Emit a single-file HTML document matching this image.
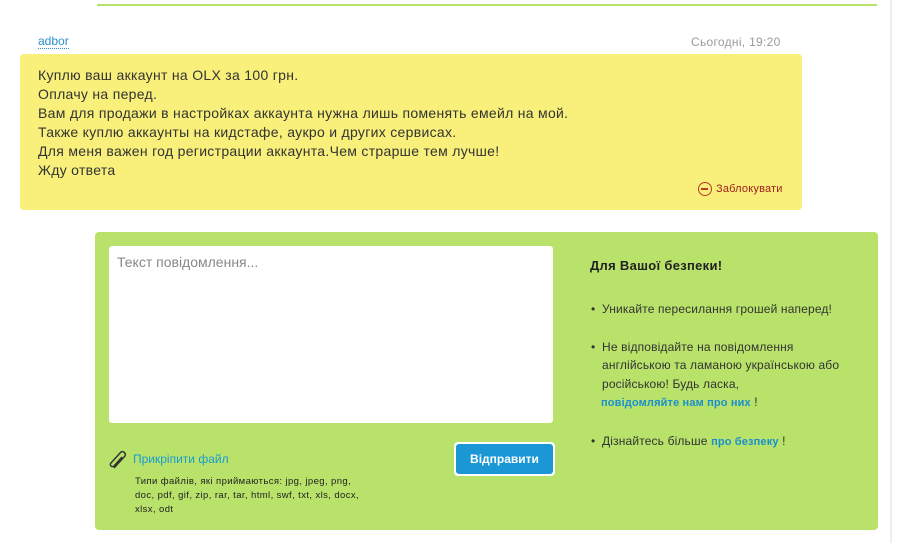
<!DOCTYPE html>
<html><head><meta charset="utf-8"><style>
*{margin:0;padding:0;box-sizing:border-box}
body{width:897px;height:543px;background:#fff;font-family:"Liberation Sans",Arial,sans-serif;position:relative;overflow:hidden;color:#333}
.a{position:absolute}
</style></head><body>
<div class="a" style="left:97px;top:4px;width:780px;height:2px;background:#b8e06b"></div>
<div class="a" style="left:890px;top:0;width:2px;height:543px;background:#eee"></div>
<div class="a" style="left:38px;top:35px;font-size:12px;color:#2a8fcf;border-bottom:1px dotted #2a8fcf;line-height:13px">adbor</div>
<div class="a" style="left:691px;top:35px;font-size:12px;color:#999;letter-spacing:0.3px">Сьогодні, 19:20</div>
<div class="a" style="left:20px;top:54px;width:782px;height:156px;background:#f8f07a;border-radius:4px"></div>
<div class="a" style="left:38px;top:66px;font-size:14px;line-height:19px;color:#333;letter-spacing:0.3px">Куплю ваш аккаунт на OLX за 100 грн.<br>Оплачу на перед.<br>Вам для продажи в настройках аккаунта нужна лишь поменять емейл на мой.<br>Также куплю аккаунты на кидстафе, аукро и других сервисах.<br>Для меня важен год регистрации аккаунта.Чем страрше тем лучше!<br>Жду ответа</div>
<div class="a" style="left:698px;top:182px;width:14px;height:14px;border:1.5px solid #c0392b;border-radius:50%"><div style="position:absolute;left:2px;top:4.5px;width:7px;height:2px;background:#c0392b"></div></div>
<div class="a" style="left:716px;top:183px;font-size:11px;color:#a02020;letter-spacing:0.2px">Заблокувати</div>
<div class="a" style="left:95px;top:232px;width:783px;height:298px;background:#b8e26a;border-radius:4px"></div>
<div class="a" style="left:109px;top:246px;width:444px;height:177px;background:#fff;border-radius:3px"></div>
<div class="a" style="left:117px;top:254px;font-size:14px;color:#888">Текст повідомлення...</div>
<svg class="a" style="left:108px;top:449px" width="22" height="22" viewBox="0 0 22 22"><path d="M6 19 L17 7 A3 3 0 0 0 13 3 L3 14 A2 2 0 0 0 6 17 L14 8" fill="none" stroke="#333" stroke-width="1.5"/></svg>
<div class="a" style="left:133px;top:452px;font-size:12px;color:#1a9bd0">Прикріпити файл</div>
<div class="a" style="left:135px;top:475px;font-size:9.5px;line-height:14px;color:#222;letter-spacing:0.4px">Типи файлів, які приймаються: jpg, jpeg, png,<br>doc, pdf, gif, zip, rar, tar, html, swf, txt, xls, docx,<br>xlsx, odt</div>
<div class="a" style="left:454px;top:442px;width:101px;height:34px;background:#fff;border-radius:4px;padding:2px"><div style="width:97px;height:30px;background:#1a97d4;border-radius:3px;color:#fff;font-weight:bold;font-size:12px;text-align:center;line-height:30px">Відправити</div></div>
<div class="a" style="left:590px;top:258px;font-size:13px;font-weight:bold;color:#222;letter-spacing:0.3px">Для Вашої безпеки!</div>
<div class="a" style="left:590px;top:300px;font-size:12px;line-height:18.5px;color:#333;width:290px;letter-spacing:0.15px">
<div style="padding-left:12px;position:relative"><span style="position:absolute;left:1px">•</span>Уникайте пересилання грошей наперед!</div>
<div style="padding-left:12px;position:relative;margin-top:19px"><span style="position:absolute;left:1px">•</span>Не відповідайте на повідомлення<br>англійською та ламаною українською або<br>російською! Будь ласка,<br><span style="margin-left:-1px;color:#1a8fcf;font-weight:bold;font-size:11px">повідомляйте нам про них</span> !</div>
<div style="padding-left:12px;position:relative;margin-top:19px"><span style="position:absolute;left:1px">•</span>Дізнайтесь більше <span style="color:#1a8fcf;font-weight:bold;font-size:11px">про безпеку</span> !</div>
</div>
</body></html>
